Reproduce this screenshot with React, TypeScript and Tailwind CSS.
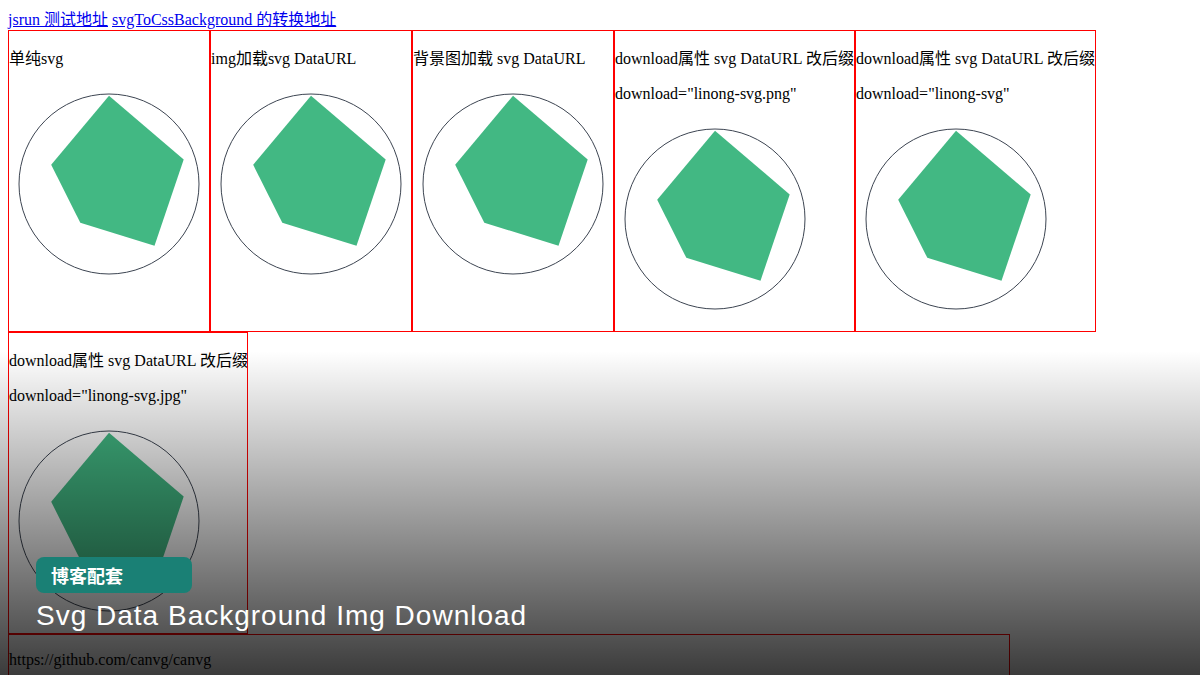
import React from "react";

const serif = "font-['Liberation_Serif','Noto_Sans_CJK_SC',serif]";

function Shape({ offset }: { offset: string }) {
  return (
    <svg className={`block h-[200px] w-[200px] ${offset}`} viewBox="0 0 200 200">
      <circle cx="100" cy="100" r="90" fill="none" stroke="#3d4552" strokeWidth="1" />
      <polygon points="100,11.7 174.7,75.5 145.5,161.7 71.3,138.8 42.2,80.8" fill="#42b883" />
    </svg>
  );
}

type Demo = {
  title: string;
  note?: string;
  width: string;
};

const demos: Demo[] = [
  { title: "单纯svg", width: "w-[202px]" },
  { title: "img加载svg DataURL", width: "w-[202px]" },
  { title: "背景图加载 svg DataURL", width: "w-[202px]" },
  { title: "download属性 svg DataURL 改后缀", note: 'download="linong-svg.png"', width: "w-[241px]" },
  { title: "download属性 svg DataURL 改后缀", note: 'download="linong-svg"', width: "w-[241px]" },
  { title: "download属性 svg DataURL 改后缀", note: 'download="linong-svg.jpg"', width: "w-[240px]" },
];

export default function App() {
  return (
    <div className={`relative h-[675px] overflow-hidden bg-white p-2 text-[16px] text-black ${serif}`}>
      {/* links */}
      <div className="h-[22px] pt-[2px] leading-[20px]">
        <a href="#" className="text-[#0000ee] underline">
          jsrun 测试地址
        </a>{" "}
        <a href="#" className="text-[#0000ee] underline">
          svgToCssBackground 的转换地址
        </a>
      </div>

      {/* demo boxes */}
      <div className="flex flex-wrap items-start">
        {demos.map((d, i) => (
          <div
            key={i}
            className={`h-[302px] shrink-0 overflow-hidden border border-[#f00] ${d.width}`}
          >
            <p className="mb-[15px] mt-[18px] whitespace-nowrap leading-[20px]">{d.title}</p>
            {d.note && <p className="mb-[15px] whitespace-nowrap leading-[20px]">{d.note}</p>}
            <Shape offset={d.note ? "mt-0" : "mt-[3px]"} />
          </div>
        ))}
      </div>

      <div className="h-[120px] w-[1002px] border border-[#f00]">
        <p className="my-4 leading-[18px]">https://github.com/canvg/canvg</p>
      </div>

      {/* thumbnail overlay */}
      <div className="absolute inset-0 bg-[linear-gradient(180deg,rgba(0,0,0,0)_52%,rgba(0,0,0,0.77)_100%)]">
        <div className="absolute left-[36px] top-[557px] flex flex-col items-start">
          <div className="h-[36px] w-[156px] rounded-lg bg-[#1a8075] pl-[15px] font-['Noto_Sans_CJK_SC',sans-serif] text-[18px] font-semibold leading-[36px] text-white">
            博客配套
          </div>
          <div className="mt-[6px] font-['Liberation_Sans',Arial,sans-serif] text-[28px] leading-[34px] tracking-[1px] text-white">
            Svg Data Background Img Download
          </div>
        </div>
      </div>
    </div>
  );
}
